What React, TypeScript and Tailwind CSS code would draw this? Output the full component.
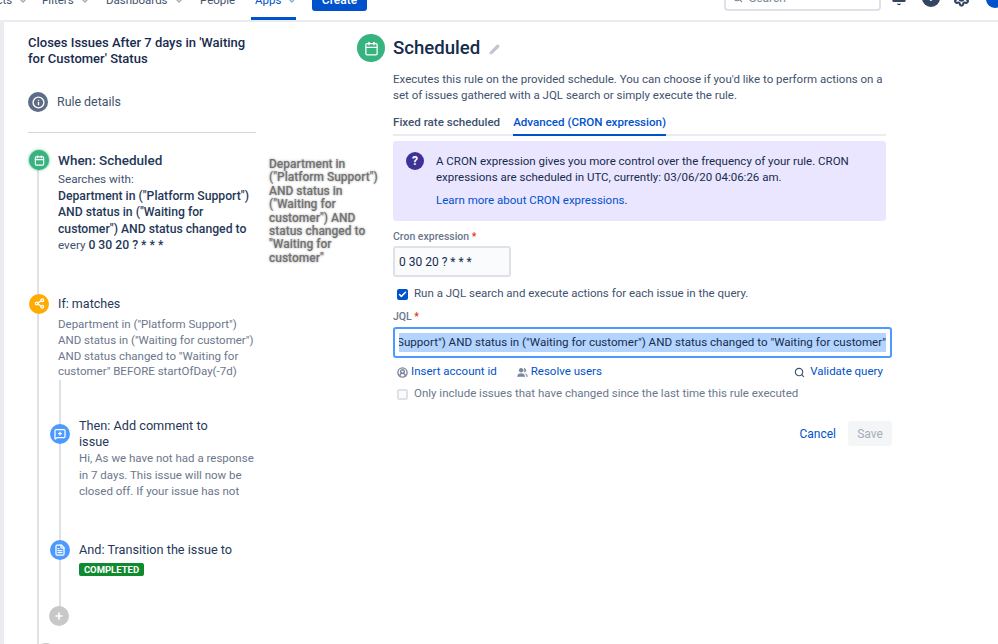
import { Calendar, Check, ChevronDown, CircleUserRound, FileText, Info, MessageSquarePlus, Pencil, Plus, Search, Settings, Share2, Users, Bell } from "lucide-react";

const navItems = [
  { label: "Projects", width: "w-[72px]", caret: true },
  { label: "Filters", width: "w-[64px]", caret: true },
  { label: "Dashboards", width: "w-[94px]", caret: true },
  { label: "People", width: "w-[51px]" },
  { label: "Apps", width: "w-[45px]", caret: true, active: true },
];

function Header() {
  return (
    <header className="relative z-10 h-[22px] overflow-hidden border-b-2 border-[#ebecf0] bg-white">
      <div className="-mt-[12px] flex h-[32px] items-start">
        <nav className="-ml-[30px] flex h-[32px] shrink-0 items-start text-[11.5px] text-[#42526e]">
          {navItems.map((item) => (
            <div
              key={item.label}
              className={`flex h-[32px] items-start gap-[7px] pt-[4px] ${item.width} ${item.active ? "border-b-[3px] border-[#0052cc] pl-[4px] text-[#0052cc]" : ""}`}
            >
              <span>{item.label}</span>
              {item.caret && <ChevronDown className="mt-[5px] size-[8px] opacity-50" strokeWidth={4} />}
            </div>
          ))}
        </nav>
        <button className="ml-[16px] h-[23px] w-[55px] shrink-0 rounded-[3px] bg-[#0052cc] text-[12px] font-medium text-white">
          Create
        </button>
        <div className="ml-auto flex items-start">
          <div className="-mt-[4px] flex h-[27px] w-[157px] items-center gap-[6px] rounded-[4px] border-2 border-[#dfe1e6] pl-[6px] text-[12px] text-[#7a869a]">
            <Search className="size-[11px]" strokeWidth={2.5} />
            Search
          </div>
          <Bell className="ml-[10px] mt-[2px] size-[16px] fill-[#344563] text-[#344563]" />
          <div className="ml-[15px] mt-[1px] flex size-[18px] items-center justify-center rounded-full bg-[#344563] text-[11px] font-bold text-white">?</div>
          <Settings className="ml-[13px] mt-[2px] size-[17px] text-[#344563]" strokeWidth={3} />
          <div className="-mr-[6px] ml-[16px] mt-[2px] size-[18px] rounded-full bg-[#0052cc]" />
        </div>
      </div>
    </header>
  );
}

function Dot({ className, children }: { className: string; children?: React.ReactNode }) {
  return (
    <div className={`flex size-[20px] shrink-0 items-center justify-center rounded-full text-white ${className}`}>
      {children}
    </div>
  );
}

function Timeline() {
  return (
    <aside className="w-[229px] shrink-0 pt-[13px]">
      <h2 className="text-[13px] font-medium leading-[15.7px] text-[#172b4d]">
        Closes Issues After 7 days in 'Waiting for Customer' Status
      </h2>
      <div className="mt-[26px] flex items-center gap-[9px] text-[12.4px] text-[#42526e]">
        <Dot className="bg-[#5e6c84]">
          <Info className="size-[13px]" strokeWidth={2.5} />
        </Dot>
        Rule details
      </div>
      <div className="mt-[20px] h-px w-[228px] bg-[#d3d5da]" />

      <div className="ml-[9px] mt-[17px] h-[510px] border-l-2 border-[#dfe1e6]">
        <div className="-ml-[10px] flex gap-[9px]">
          <Dot className="bg-[#36b37e] shadow-[0_0_3px_#36b37e]">
            <Calendar className="size-[11px]" strokeWidth={2.5} />
          </Dot>
          <div className="w-[200px] text-[11.7px] leading-[16.5px] text-[#42526e]">
            <div className="mb-[1px] text-[13.5px] font-medium leading-[20px] text-[#253858]">When: Scheduled</div>
            <div>Searches with:</div>
            <div className="text-[12.2px] font-medium text-[#253858]">
              Department in ("Platform Support") AND status in ("Waiting for customer") AND status changed to
            </div>
            every <span className="text-[12.2px] font-medium text-[#253858]">0 30 20 ? * * *</span>
          </div>
        </div>

        <div className="-ml-[10px] mt-[40px] flex gap-[9px]">
          <Dot className="bg-[#ffab00]">
            <Share2 className="size-[11px]" strokeWidth={3} />
          </Dot>
          <div className="w-[200px] text-[11.5px] leading-[15.8px] text-[#6b778c]">
            <div className="mb-[3px] text-[12.5px] leading-[20px] text-[#253858]">If: matches</div>
            Department in ("Platform Support") AND status in ("Waiting for customer") AND status changed to "Waiting for customer" BEFORE startOfDay(-7d)
          </div>
        </div>

        <div className="ml-[20px] h-[231px] border-l-2 border-[#dfe1e6] pt-[44px]">
          <div className="-ml-[11px] flex gap-[9px]">
            <Dot className="bg-[#4c9aff]">
              <MessageSquarePlus className="size-[12px]" strokeWidth={2.5} />
            </Dot>
            <div className="-mt-[6px] w-[178px] text-[11.5px] leading-[16.4px] text-[#6b778c]">
              <div className="w-[150px] text-[12.7px] leading-[16px] text-[#253858]">Then: Add comment to issue</div>
              Hi, As we have not had a response in 7 days. This issue will now be closed off. If your issue has not
            </div>
          </div>
          <div className="-ml-[11px] mt-[41px] flex gap-[9px]">
            <Dot className="bg-[#4c9aff]">
              <FileText className="size-[12px]" strokeWidth={2.5} />
            </Dot>
            <div>
              <div className="text-[12.7px] leading-[20px] text-[#253858]">And: Transition the issue to</div>
              <div className="mt-[3px] flex h-[13px] w-[65px] items-center justify-center rounded-[2px] bg-[#108a2f] text-[9.5px] font-bold text-white">
                COMPLETED
              </div>
            </div>
          </div>
        </div>
        <div className="-mt-[5px] ml-[10px]">
          <Dot className="bg-[#c8c8c8]">
            <Plus className="size-[10px]" strokeWidth={4} />
          </Dot>
        </div>
        <Dot className="-ml-[3px] mt-[17px] bg-[#c8c8c8]" />
      </div>
    </aside>
  );
}

function DragGhost() {
  return (
    <div className="ml-[12px] mt-[136px] w-[112px] shrink-0 text-[12px] font-medium leading-[13.4px] text-[#737373] [text-shadow:0_0_2px_#bdbdbd,0_0_3px_#c8c8c8]">
      Department in ("Platform Support") AND status in ("Waiting for customer") AND status changed to "Waiting for customer"
    </div>
  );
}

function Required() {
  return <span className="text-[#de350b]"> *</span>;
}

function Form() {
  return (
    <main className="mt-[12px] flex flex-1">
      <div className="flex size-[28px] shrink-0 items-center justify-center rounded-full bg-[#36b37e] text-white">
        <Calendar className="size-[15px]" />
      </div>
      <div className="ml-[8px] w-[499px]">
        <div className="flex h-[30px] items-center gap-[9px] text-[18.6px] font-medium text-[#172b4d]">
          Scheduled
          <Pencil className="size-[11px] fill-[#c1c7d0] text-[#c1c7d0]" />
        </div>
        <p className="mt-[7px] w-[495px] text-[11.5px] leading-[16px] text-[#42526e]">
          Executes this rule on the provided schedule. You can choose if you'd like to perform actions on a set of issues gathered with a JQL search or simply execute the rule.
        </p>
        <div className="mt-[10px] flex h-[23px] w-[493px] gap-[13px] border-b-2 border-[#ebecf0] text-[11.6px] font-medium leading-[19px]">
          <span className="text-[#42526e]">Fixed rate scheduled</span>
          <span className="h-[23px] border-b-2 border-[#0052cc] text-[#0052cc]">Advanced (CRON expression)</span>
        </div>

        <div className="mt-[5px] flex h-[80px] w-[493px] gap-[12px] rounded-[3px] bg-[#eae6ff] pl-[13px] pt-[12px] text-[11.5px] leading-[16px] text-[#172b4d]">
          <div className="-mt-[1px] flex size-[18px] shrink-0 items-center justify-center rounded-full bg-[#403294] text-[12px] font-bold text-white">?</div>
          <div className="w-[425px]">
            A CRON expression gives you more control over the frequency of your rule. CRON expressions are scheduled in UTC, currently: 03/06/20 04:06:26 am.
            <div className="mt-[7px]">
              <a className="text-[#0052cc]">Learn more about CRON expressions</a>.
            </div>
          </div>
        </div>

        <div className="mt-[9px] text-[10.5px] font-medium leading-[13px] text-[#6b778c]">
          Cron expression<Required />
        </div>
        <div className="mt-[3px] flex h-[31px] w-[118px] items-center rounded-[3px] border-2 border-[#dfe1e6] bg-[#fafbfc] pl-[4px] text-[12px] text-[#172b4d]">
          0 30 20 ? * * *
        </div>

        <label className="ml-[4px] mt-[10px] flex h-[14px] items-center gap-[6px] text-[11.5px] text-[#42526e]">
          <span className="flex size-[11px] items-center justify-center rounded-[2px] bg-[#0052cc] text-white">
            <Check className="size-[9px]" strokeWidth={4} />
          </span>
          Run a JQL search and execute actions for each issue in the query.
        </label>

        <div className="mt-[9px] text-[10.5px] font-medium leading-[13px] text-[#6b778c]">
          JQL<Required />
        </div>
        <div className="mt-[4px] flex h-[31px] w-[499px] items-center rounded-[3px] border-2 border-[#4c9aff] bg-white px-[4px]">
          <div className="flex w-full justify-end overflow-hidden whitespace-nowrap text-[11.6px] leading-[19px] text-[#172b4d]">
            <span className="shrink-0 bg-[#b3d4ff]">
              Department in ("Platform Support") AND status in ("Waiting for customer") AND status changed to "Waiting for customer"
            </span>
          </div>
        </div>

        <div className="mt-[6px] flex h-[16px] items-center text-[11.5px] text-[#0052cc]">
          <CircleUserRound className="ml-[4px] size-[11px] text-[#7a869a]" strokeWidth={3} />
          <span className="ml-[3px]">Insert account id</span>
          <Users className="ml-[20px] size-[11px] fill-[#7a869a] text-[#7a869a]" />
          <span className="ml-[3px]">Resolve users</span>
          <Search className="ml-auto mr-[5px] size-[11px] text-[#42526e]" strokeWidth={2.5} />
          <span className="mr-[9px]">Validate query</span>
        </div>

        <label className="ml-[4px] mt-[7px] flex h-[14px] items-center gap-[6px] text-[11.5px] text-[#6b778c]">
          <span className="size-[11px] rounded-[2px] border-2 border-[#dfe1e6] bg-[#fafbfc]" />
          Only include issues that have changed since the last time this rule executed
        </label>

        <div className="mt-[20px] flex items-center justify-end gap-[12px] text-[12px]">
          <a className="text-[#0052cc]">Cancel</a>
          <button className="h-[25px] w-[44px] rounded-[3px] bg-[#f4f5f7] text-[#a5adba]">Save</button>
        </div>
      </div>
    </main>
  );
}

export default function App() {
  return (
    <div className="h-[644px] w-[998px] overflow-hidden bg-white font-['Roboto',sans-serif]">
      <Header />
      <div className="flex h-[622px] border-l-[4px] border-[#ebecf0] pl-[24px]">
        <Timeline />
        <DragGhost />
        <div className="-ml-[24px] flex">
          <Form />
        </div>
      </div>
    </div>
  );
}
